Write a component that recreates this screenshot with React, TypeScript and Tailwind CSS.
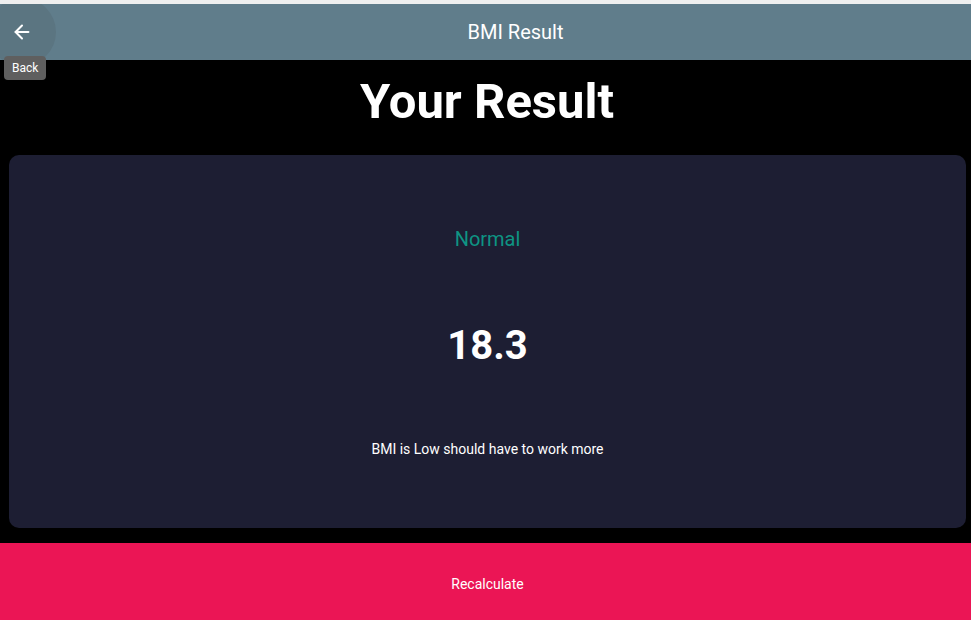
import { ArrowLeft } from "lucide-react"

export default function App() {
  return (
    <div className="flex h-[620px] w-full flex-col overflow-hidden bg-black font-['Roboto',sans-serif]">
      <div className="h-[4px] bg-[#efefef]" />

      <header className="relative flex h-[56px] items-center overflow-hidden bg-[#607d8b]">
        <div className="absolute left-[-12px] top-[-6px] h-[68px] w-[68px] rounded-full bg-[#5b7581]" />
        <button className="relative flex h-[56px] w-[44px] items-center justify-center text-white">
          <ArrowLeft className="size-[22px]" strokeWidth={2.2} />
        </button>
        <h1 className="flex-1 pl-[16px] text-center text-[20px] font-normal text-white">
          BMI Result
        </h1>
      </header>

      <div className="relative">
        <div className="absolute left-[4px] top-[-4px] z-10 rounded-[4px] bg-[#5f5f5f] px-[8px] py-[3px] text-[12px] text-white">
          Back
        </div>
      </div>

      <div className="flex h-[95px] items-center justify-center pb-[12px] pl-[3px]">
        <h2 className="text-[49px] font-bold text-white">Your Result</h2>
      </div>

      <div className="ml-[9px] mr-[5px] flex h-[373px] flex-col items-center justify-evenly rounded-[10px] bg-[#1d1e33]">
        <p className="text-[20px] text-[#0e9483]">Normal</p>
        <p className="text-[40px] font-bold leading-[48px] text-white">18.3</p>
        <p className="text-[14px] text-white">BMI is Low should have to work more</p>
      </div>

      <button className="mt-[15px] flex flex-1 items-center justify-center bg-[#eb1555] pl-[4px] pt-[6px] text-[14px] text-white">
        Recalculate
      </button>
    </div>
  )
}
